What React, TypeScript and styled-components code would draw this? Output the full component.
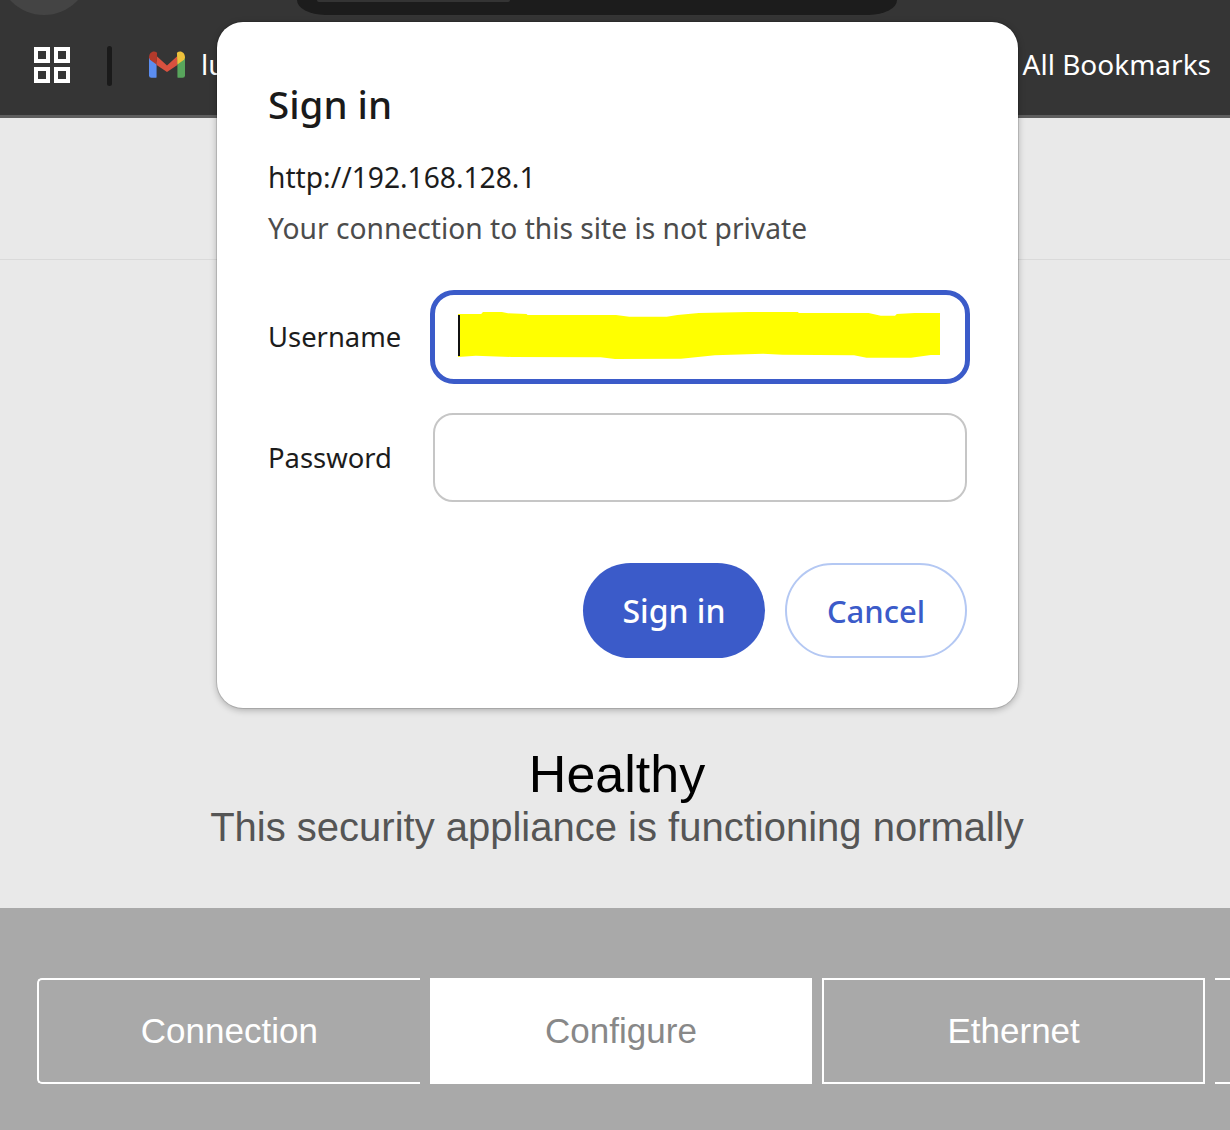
import React from "react";
import styled, { createGlobalStyle } from "styled-components";

const Global = createGlobalStyle`
  html, body { margin: 0; padding: 0; width: 1230px; height: 1130px; overflow: hidden; background: #e9e9e9; }
  * { box-sizing: border-box; }
`;

const UI = `"Noto Sans", "Open Sans", "Liberation Sans", sans-serif`;
const ARIAL = `"Liberation Sans", Arial, sans-serif`;

const Page = styled.div`
  position: relative;
  width: 1230px;
  height: 1130px;
  overflow: hidden;
  display: flex;
  flex-direction: column;
`;

const Browser = styled.header`
  height: 118px;
  background: #353535;
  border-bottom: 3px solid #5e5e5e;
  display: flex;
  flex-direction: column;
  color: #fff;
  font-family: ${UI};
`;

const TopStrip = styled.div`
  height: 15px;
  display: flex;
  align-items: stretch;
`;

const TabCircle = styled.div`
  flex: none;
  align-self: flex-start;
  width: 92px;
  height: 92px;
  margin: -77px 0 0 -2px;
  background: #444;
  border-radius: 50%;
`;

const Omnibox = styled.div`
  width: 600px;
  margin-left: 207px;
  background: #1c1c1c;
  border-radius: 0 0 28px 28px / 0 0 15px 15px;
  padding-left: 20px;
`;

const OmniInner = styled.div`
  width: 193px;
  height: 2px;
  background: #343434;
  border-radius: 0 0 8px 8px;
`;

const BookmarksBar = styled.div`
  flex: 1;
  display: flex;
  align-items: center;
  padding: 1px 19px 0 33px;
`;

const Separator = styled.div`
  width: 5px;
  height: 40px;
  margin: 0 37px 0 37px;
  background: #1a1a1a;
  border-radius: 3px;
`;

const GmailSvg = styled.svg`
  flex: none;
  width: 36px;
  height: 27px;
  margin-bottom: 2px;
`;

const Bookmark = styled.span`
  margin: 0 0 4px 16px;
  font-size: 28px;
  line-height: 40px;
`;

const AllBookmarks = styled.span`
  margin: 0 0 4px auto;
  font-size: 28px;
  line-height: 40px;
  white-space: nowrap;
`;

const HeaderBand = styled.div`
  height: 142px;
  border-bottom: 1px solid #dadada;
  background: #e9e9e9;
`;

const Status = styled.section`
  height: 648px;
  background: #e9e9e9;
  display: flex;
  flex-direction: column;
  align-items: center;
  justify-content: flex-end;
  padding: 0 0 57px 4px;
  font-family: ${ARIAL};
`;

const StatusTitle = styled.div`
  font-size: 52px;
  line-height: 56px;
  margin-bottom: 1px;
  color: #000;
`;

const StatusText = styled.div`
  font-size: 40px;
  line-height: 48px;
  color: #555;
`;

const Footer = styled.footer`
  flex: 1;
  background: #a9a9a9;
  padding: 70px 0 0 37px;
  display: flex;
  gap: 10px;
  align-items: flex-start;
`;

const NavTab = styled.div<{ $kind: "first" | "active" | "mid" | "open" }>`
  flex: none;
  width: 382.67px;
  height: 106px;
  display: flex;
  align-items: center;
  justify-content: center;
  font-family: ${ARIAL};
  font-size: 35px;
  color: ${(p) => (p.$kind === "active" ? "#888" : "#fff")};
  background: ${(p) => (p.$kind === "active" ? "#fff" : "transparent")};
  border: 2px solid #fff;
  border-right-width: ${(p) => (p.$kind === "first" || p.$kind === "open" ? 0 : 2)}px;
  border-left-width: ${(p) => (p.$kind === "open" ? 0 : 2)}px;
  border-radius: ${(p) => (p.$kind === "first" ? "5px 0 0 5px" : "0")};
`;

const Dialog = styled.div`
  position: absolute;
  left: 217px;
  top: 22px;
  width: 801px;
  height: 686px;
  padding: 59px 51px 0;
  background: #fff;
  border-radius: 26px;
  box-shadow: 0 0 0 1px rgba(0, 0, 0, 0.12), 0 2px 7px rgba(0, 0, 0, 0.28);
  font-family: ${UI};
  display: flex;
  flex-direction: column;
`;

const DialogTitle = styled.h2`
  margin: 0;
  font-size: 38.5px;
  line-height: 46px;
  font-weight: 500;
  color: #1a1a1a;
`;

const Origin = styled.div`
  margin-top: 30px;
  font-size: 28.2px;
  line-height: 40px;
  color: #1c1c1c;
`;

const Notice = styled.div`
  margin-top: 11px;
  font-size: 28.2px;
  line-height: 40px;
  color: #4c4c4c;
`;

const FormRow = styled.div<{ $gap: number }>`
  margin-top: ${(p) => p.$gap}px;
  display: flex;
  align-items: center;
`;

const FieldLabel = styled.label`
  flex: none;
  width: 165px;
  font-size: 27.4px;
  line-height: 40px;
  color: #1c1c1c;
`;

const Field = styled.div<{ $focused?: boolean }>`
  position: relative;
  flex: 1;
  height: ${(p) => (p.$focused ? 94 : 89)}px;
  margin: ${(p) => (p.$focused ? "0 -3px" : "0")};
  background: #fff;
  border: ${(p) => (p.$focused ? "5px solid #3b5bc9" : "2px solid #c6c6c6")};
  border-radius: ${(p) => (p.$focused ? 24 : 20)}px;
  display: flex;
  align-items: flex-start;
  padding: 17px 0 0 23px;
`;

const Scribble = styled.svg`
  display: block;
  width: 482px;
  height: 47px;
`;

const Caret = styled.span`
  position: absolute;
  left: 23px;
  top: 20px;
  width: 2px;
  height: 41px;
  background: #111;
`;

const Actions = styled.div`
  margin-top: 61px;
  display: flex;
  justify-content: flex-end;
  gap: 20px;
`;

const Button = styled.button<{ $primary?: boolean }>`
  width: 182px;
  height: 95px;
  padding: 0;
  border-radius: 48px;
  font-family: ${UI};
  font-size: ${(p) => (p.$primary ? 32 : 31)}px;
  font-weight: 500;
  color: ${(p) => (p.$primary ? "#fff" : "#3b5bc9")};
  background: ${(p) => (p.$primary ? "#3b5bc9" : "#fff")};
  border: ${(p) => (p.$primary ? "none" : "2.5px solid #b4c8f3")};
`;

const AppsIcon = () => (
  <svg width="37" height="37" viewBox="0 0 37 37" fill="none" stroke="#fff" strokeWidth="4">
    <rect x="3" y="2" width="12" height="12" />
    <rect x="23" y="2" width="12" height="12" />
    <rect x="3" y="22" width="12" height="12" />
    <rect x="23" y="22" width="12" height="12" />
  </svg>
);

const GmailIcon = () => (
  <GmailSvg viewBox="0 0 38 28">
    <path d="M0 7v18.5A2.5 2.5 0 0 0 2.5 28h5A.5.5 0 0 0 8 27.5V11z" fill="#5b8df0" />
    <path d="M38 7v18.5a2.500 2.500 0 0 1-2.500 2.500h-5a.5.5 0 0 1-.5-.5V11z" fill="#58a55c" />
    <path d="M8 5 19 15 30 5v9.500L19 22 8 14.500z" fill="#d9513f" />
    <path d="M0 6.500C0 1 5-1.500 8.500 1.500L8 14 1 9z" fill="#b23a2b" />
    <path d="M38 6.500C38 1 33-1.500 29.500 1.500L30 14l7-5z" fill="#eec13b" />
  </GmailSvg>
);

export default function App() {
  return (
    <Page>
      <Global />
      <Browser>
        <TopStrip>
          <TabCircle />
          <Omnibox>
            <OmniInner />
          </Omnibox>
        </TopStrip>
        <BookmarksBar>
          <AppsIcon />
          <Separator />
          <GmailIcon />
          <Bookmark>lu</Bookmark>
          <AllBookmarks>All Bookmarks</AllBookmarks>
        </BookmarksBar>
      </Browser>
      <HeaderBand />
      <Status>
        <StatusTitle>Healthy</StatusTitle>
        <StatusText>This security appliance is functioning normally</StatusText>
      </Status>
      <Footer>
        <NavTab $kind="first">Connection</NavTab>
        <NavTab $kind="active">Configure</NavTab>
        <NavTab $kind="mid">Ethernet</NavTab>
        <NavTab $kind="open" />
      </Footer>
      <Dialog>
        <DialogTitle>Sign in</DialogTitle>
        <Origin>http://192.168.128.1</Origin>
        <Notice>Your connection to this site is not private</Notice>
        <FormRow $gap={42}>
          <FieldLabel>Username</FieldLabel>
          <Field $focused>
            <Scribble viewBox="105 96 1351 141" preserveAspectRatio="none">
              <polygon
                fill="#ffff00"
                points="105,102 170,102 175,96 228,96 245,100 297,102 300,105 548,105 585,110 690,110 720,105 780,99 918,96 1058,96 1060,99 1256,99 1290,107 1330,107 1335,102 1385,99 1456,99 1456,225 1430,225 1375,233 1250,233 1215,226 1015,224 960,221 825,226 730,236 545,237 505,232 255,231 155,227 105,231"
              />
            </Scribble>
            <Caret />
          </Field>
        </FormRow>
        <FormRow $gap={29}>
          <FieldLabel>Password</FieldLabel>
          <Field />
        </FormRow>
        <Actions>
          <Button $primary>Sign in</Button>
          <Button>Cancel</Button>
        </Actions>
      </Dialog>
    </Page>
  );
}
